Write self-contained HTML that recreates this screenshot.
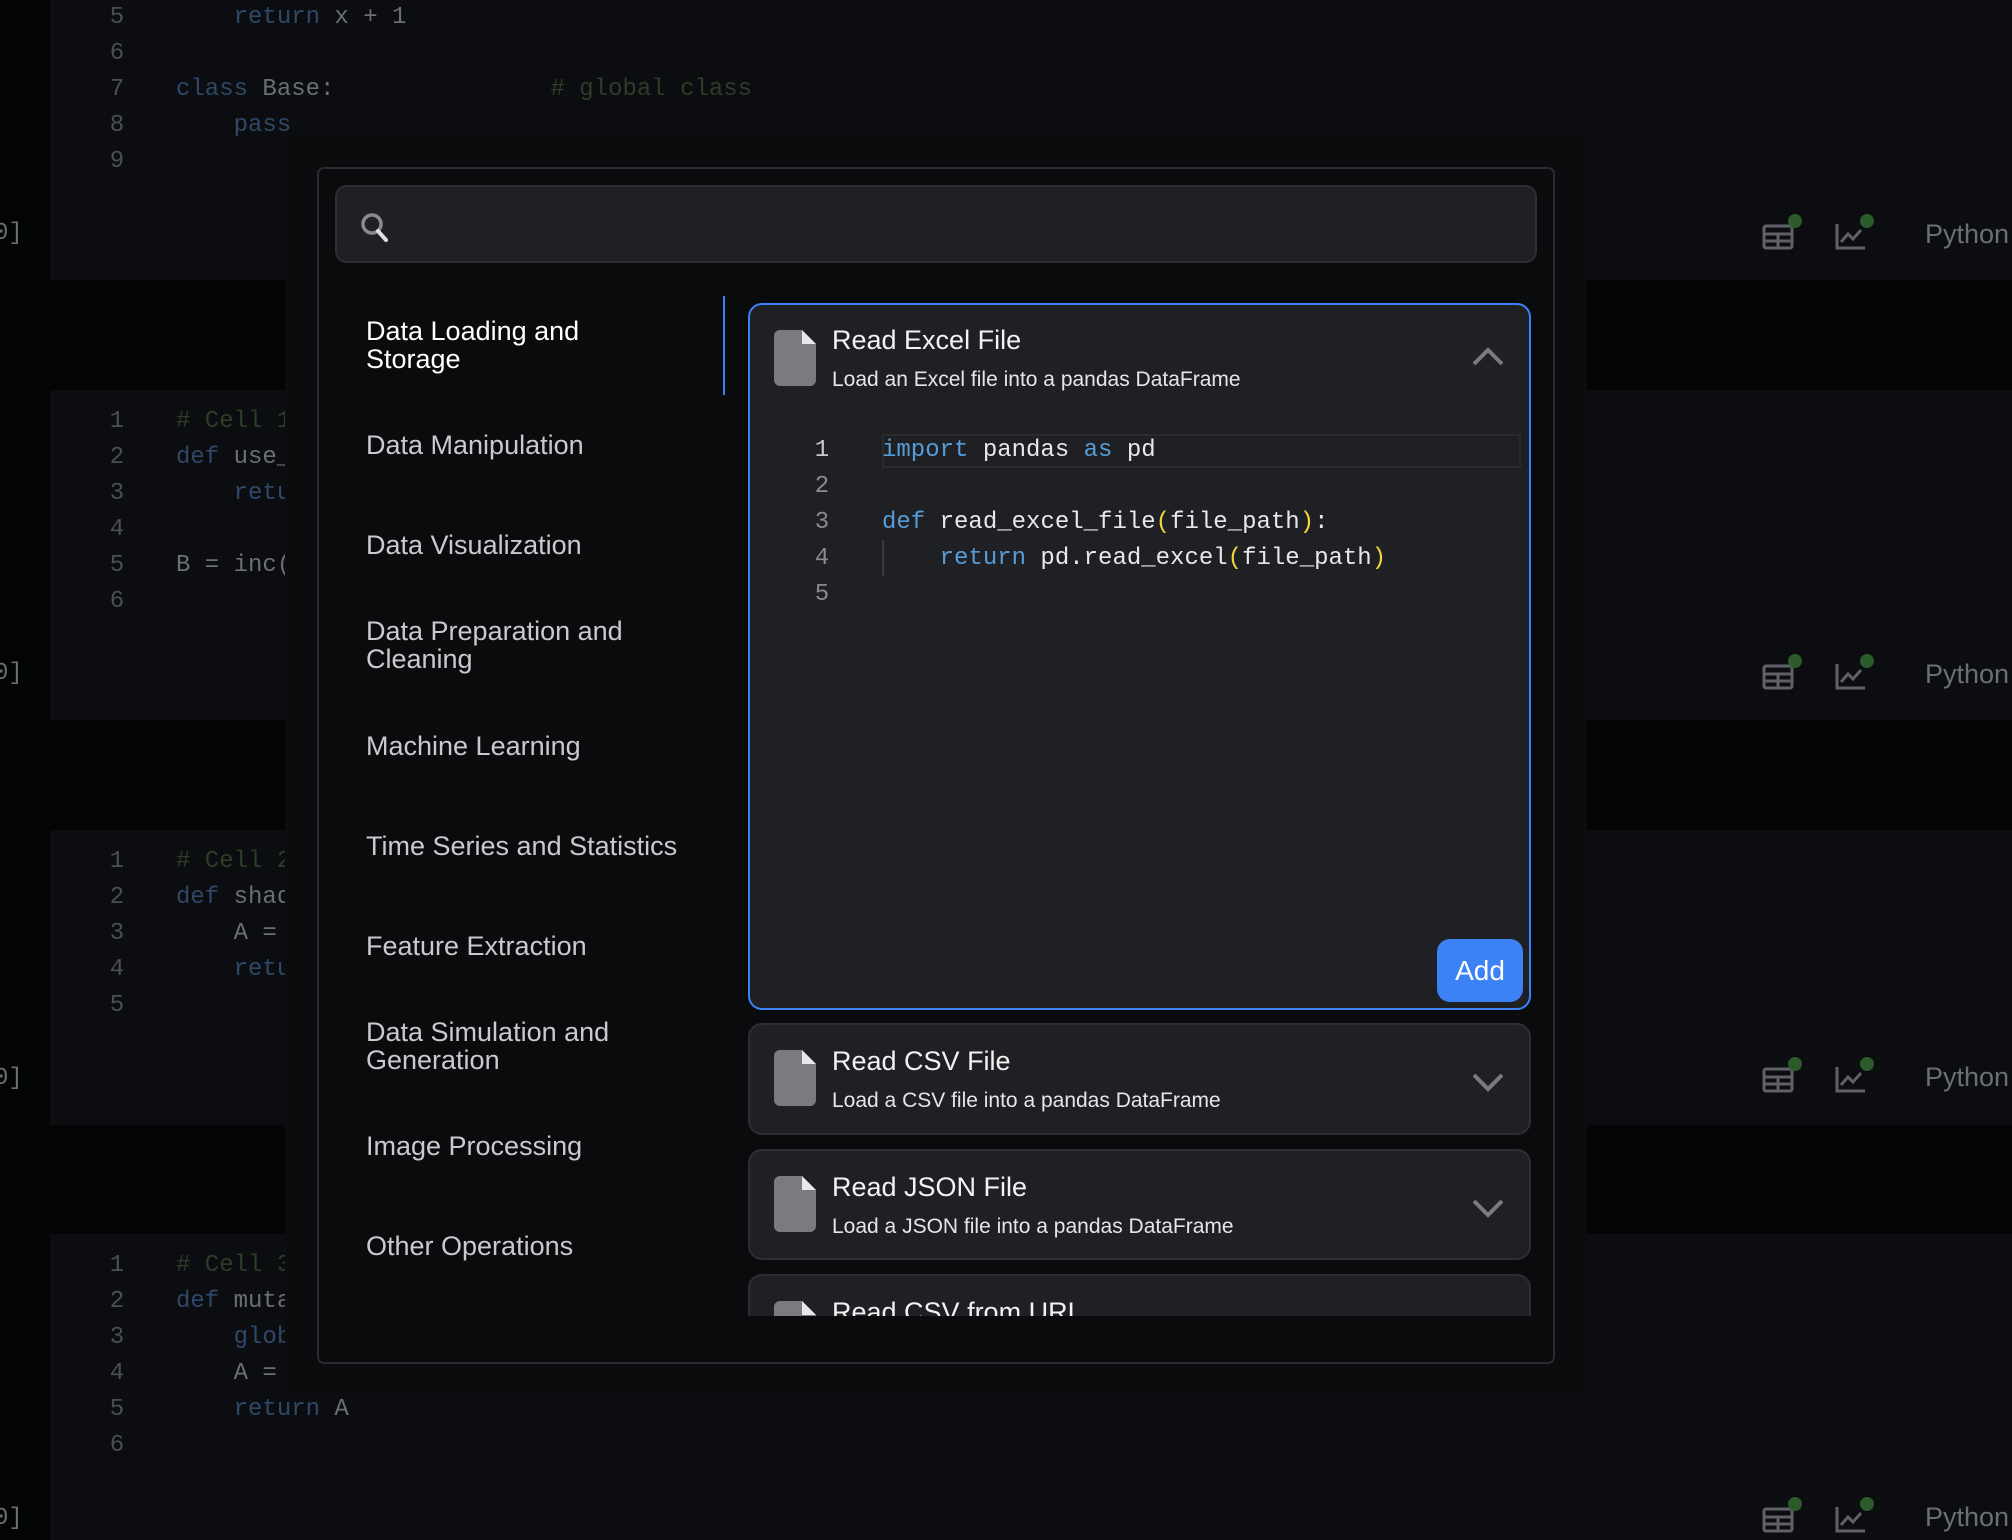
<!DOCTYPE html>
<html><head><meta charset="utf-8"><style>
*{margin:0;padding:0;box-sizing:border-box}
body{width:2012px;height:1540px;background:#030404;position:relative;overflow:hidden;font-family:"Liberation Sans",sans-serif}
.cell{position:absolute;left:50px;right:0;background:#0c0d10}
.mono{font-family:"Liberation Mono",monospace;font-size:24px;line-height:36px;white-space:pre;position:absolute}
.ln{color:#4b4e54;left:52px;width:30px;text-align:center}
.cd{color:#6b6e73;left:126px}
.kw{color:#2d4868}.cm{color:#2c3d28}
.lbl{position:absolute;left:-6px;color:#6b6e73;font-family:"Liberation Mono",monospace;font-size:24px}
.py{position:absolute;left:1925px;color:#6b6e73;font-size:27px}
.overlay{position:absolute;left:285px;top:135px;width:1302px;height:1261px;background:#0b0c0e}
.modal{position:absolute;left:317px;top:167px;width:1238px;height:1197px;background:#0a0b0d;border:2px solid #2a2c30;border-radius:7px}
.search{position:absolute;left:335px;top:185px;width:1202px;height:78px;background:#1f2024;border:2px solid #2e3035;border-radius:12px}
.cat{position:absolute;left:366px;color:#c9cacd;font-size:27px;line-height:28px}
.card{position:absolute;left:748px;width:783px;background:#1f2024;border:2px solid #2c2e33;border-radius:14px;overflow:hidden}
.fi{position:absolute;left:24px;width:42px;height:56px}
.ttl{position:absolute;left:82px;color:#f2f2f3;font-size:27px}
.dsc{position:absolute;left:82px;color:#e6e6e8;font-size:21px}
.chev{position:absolute;left:720px;width:36px;height:24px}
</style></head><body>

<div class="cell" style="top:0;height:280px">
<div class="mono ln" style="top:0px">5
6
7
8
9</div>
<div class="mono cd" style="top:0px">    <span class="kw">return</span> x + 1

<span class="kw">class</span> Base:               <span class="cm"># global class</span>
    <span class="kw">pass</span>
</div>
</div>
<div class="lbl" style="top:220px">0]</div>

<div class="cell" style="top:390px;height:330px">
<div class="mono ln" style="top:14px">1
2
3
4
5
6</div>
<div class="mono cd" style="top:14px"><span class="cm"># Cell 1</span>
<span class="kw">def</span> use_global():
    <span class="kw">return</span> x

B = inc(5)
</div>
</div>
<div class="lbl" style="top:660px">0]</div>

<div class="cell" style="top:830px;height:295px">
<div class="mono ln" style="top:14px">1
2
3
4
5</div>
<div class="mono cd" style="top:14px"><span class="cm"># Cell 2</span>
<span class="kw">def</span> shadow():
    A = 1
    <span class="kw">return</span> A
</div>
</div>
<div class="lbl" style="top:1065px">0]</div>

<div class="cell" style="top:1234px;height:306px">
<div class="mono ln" style="top:14px">1
2
3
4
5
6</div>
<div class="mono cd" style="top:14px"><span class="cm"># Cell 3</span>
<span class="kw">def</span> mutate():
    <span class="kw">global</span> A
    A = 2
    <span class="kw">return</span> A
</div>
</div>
<div class="lbl" style="top:1505px">0]</div>

<svg style="position:absolute;left:0;top:0" width="2012" height="1540">
<g fill="none" stroke="#5f6166" stroke-width="3">
<g transform="translate(1762,222)"><rect x="2" y="4" width="28" height="22" rx="2"/><path d="M2 12H30M16 12V26M2 19H30"/></g>
<g transform="translate(1835,222)"><path d="M2 2V26H30M6 20L13 12L18 17L26 8"/></g>
<g transform="translate(1762,662)"><rect x="2" y="4" width="28" height="22" rx="2"/><path d="M2 12H30M16 12V26M2 19H30"/></g>
<g transform="translate(1835,662)"><path d="M2 2V26H30M6 20L13 12L18 17L26 8"/></g>
<g transform="translate(1762,1065)"><rect x="2" y="4" width="28" height="22" rx="2"/><path d="M2 12H30M16 12V26M2 19H30"/></g>
<g transform="translate(1835,1065)"><path d="M2 2V26H30M6 20L13 12L18 17L26 8"/></g>
<g transform="translate(1762,1505)"><rect x="2" y="4" width="28" height="22" rx="2"/><path d="M2 12H30M16 12V26M2 19H30"/></g>
<g transform="translate(1835,1505)"><path d="M2 2V26H30M6 20L13 12L18 17L26 8"/></g>
</g>
<g fill="#2b5a2b">
<circle cx="1795" cy="221" r="7"/><circle cx="1867" cy="221" r="7"/>
<circle cx="1795" cy="661" r="7"/><circle cx="1867" cy="661" r="7"/>
<circle cx="1795" cy="1064" r="7"/><circle cx="1867" cy="1064" r="7"/>
<circle cx="1795" cy="1504" r="7"/><circle cx="1867" cy="1504" r="7"/>
</g>
</svg>
<div class="py" style="top:219px">Python</div>
<div class="py" style="top:659px">Python</div>
<div class="py" style="top:1062px">Python</div>
<div class="py" style="top:1502px">Python</div>

<div class="overlay"></div>
<div class="modal"></div>
<div class="search">
<svg style="position:absolute;left:22px;top:24px" width="34" height="34" viewBox="0 0 34 34"><circle cx="13" cy="13" r="9" fill="none" stroke="#8a8b90" stroke-width="3.5"/><path d="M19 20L27 29" stroke="#e0e0e2" stroke-width="4" stroke-linecap="round"/></svg>
</div>

<div class="cat" style="top:317px;color:#fff">Data Loading and<br>Storage</div>
<div style="position:absolute;left:723px;top:296px;width:2px;height:99px;background:#3b82f6"></div>
<div class="cat" style="top:431px">Data Manipulation</div>
<div class="cat" style="top:531px">Data Visualization</div>
<div class="cat" style="top:617px">Data Preparation and<br>Cleaning</div>
<div class="cat" style="top:732px">Machine Learning</div>
<div class="cat" style="top:832px">Time Series and Statistics</div>
<div class="cat" style="top:932px">Feature Extraction</div>
<div class="cat" style="top:1018px">Data Simulation and<br>Generation</div>
<div class="cat" style="top:1132px">Image Processing</div>
<div class="cat" style="top:1232px">Other Operations</div>

<div class="card" style="top:303px;height:707px;border-color:#3b82f6">
<svg class="fi" style="top:25px" viewBox="0 0 42 56"><path d="M6 0H28L42 14V50A6 6 0 0 1 36 56H6A6 6 0 0 1 0 50V6A6 6 0 0 1 6 0Z" fill="#7a7b80"/><path d="M28 0V14H42Z" fill="#e8e8ea"/></svg>
<div class="ttl" style="top:20px">Read Excel File</div>
<div class="dsc" style="top:63px">Load an Excel file into a pandas DataFrame</div>
<svg class="chev" style="top:40px" viewBox="0 0 36 24"><path d="M4 19L18 5L32 19" fill="none" stroke="#7a7b80" stroke-width="4"/></svg>
<div style="position:absolute;left:132px;top:129px;width:639px;height:34px;border:2px solid #2a2b2f"></div>
<div style="position:absolute;left:132px;top:235px;width:2px;height:36px;background:#3a3b40"></div>
<div class="mono" style="left:57px;top:128px;width:30px;text-align:center;color:#c8c9cc">1</div>
<div class="mono" style="left:57px;top:164px;width:30px;text-align:center;color:#8a8b90">2
3
4
5</div>
<div class="mono" style="left:132px;top:128px;color:#e8e8ea"><span style="color:#569cd6">import</span> pandas <span style="color:#569cd6">as</span> pd

<span style="color:#569cd6">def</span> read_excel_file<span style="color:#f5d33b">(</span>file_path<span style="color:#f5d33b">)</span>:
    <span style="color:#569cd6">return</span> pd.read_excel<span style="color:#f5d33b">(</span>file_path<span style="color:#f5d33b">)</span></div>
<div style="position:absolute;left:687px;top:634px;width:86px;height:63px;background:#3b82f6;border-radius:13px;color:#fff;font-size:28px;text-align:center;line-height:63px">Add</div>
</div>

<div class="card" style="top:1023px;height:112px">
<svg class="fi" style="top:25px" viewBox="0 0 42 56"><path d="M6 0H28L42 14V50A6 6 0 0 1 36 56H6A6 6 0 0 1 0 50V6A6 6 0 0 1 6 0Z" fill="#7a7b80"/><path d="M28 0V14H42Z" fill="#e8e8ea"/></svg>
<div class="ttl" style="top:21px">Read CSV File</div>
<div class="dsc" style="top:64px">Load a CSV file into a pandas DataFrame</div>
<svg class="chev" style="top:45px" viewBox="0 0 36 24"><path d="M4 5L18 19L32 5" fill="none" stroke="#7a7b80" stroke-width="4"/></svg>
</div>

<div class="card" style="top:1149px;height:111px">
<svg class="fi" style="top:25px" viewBox="0 0 42 56"><path d="M6 0H28L42 14V50A6 6 0 0 1 36 56H6A6 6 0 0 1 0 50V6A6 6 0 0 1 6 0Z" fill="#7a7b80"/><path d="M28 0V14H42Z" fill="#e8e8ea"/></svg>
<div class="ttl" style="top:21px">Read JSON File</div>
<div class="dsc" style="top:64px">Load a JSON file into a pandas DataFrame</div>
<svg class="chev" style="top:45px" viewBox="0 0 36 24"><path d="M4 5L18 19L32 5" fill="none" stroke="#7a7b80" stroke-width="4"/></svg>
</div>

<div style="position:absolute;left:748px;top:1274px;width:783px;height:42px;overflow:hidden">
<div class="card" style="left:0;top:0;height:111px">
<svg class="fi" style="top:25px" viewBox="0 0 42 56"><path d="M6 0H28L42 14V50A6 6 0 0 1 36 56H6A6 6 0 0 1 0 50V6A6 6 0 0 1 6 0Z" fill="#7a7b80"/><path d="M28 0V14H42Z" fill="#e8e8ea"/></svg>
<div class="ttl" style="top:21px">Read CSV from URL</div>
</div>
</div>

</body></html>
